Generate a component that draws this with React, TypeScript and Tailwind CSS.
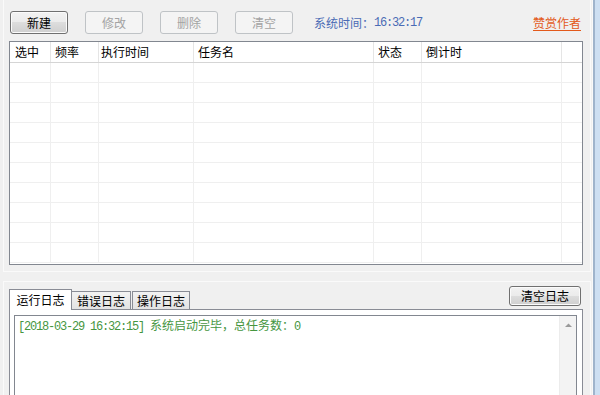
import type { ReactNode } from 'react'

const cols = [
  { label: '选中', w: 'w-[41px] pl-[5px]' },
  { label: '频率', w: 'w-[48px] pl-[4px]' },
  { label: '执行时间', w: 'w-[95px] pl-[2px]' },
  { label: '任务名', w: 'w-[180px] pl-[4px]' },
  { label: '状态', w: 'w-[48px] pl-[4px]' },
  { label: '倒计时', w: 'w-[140px] pl-[4px]' },
]

const mono = "font-['Liberation_Mono',monospace] text-[12px] tracking-[-1.2px]"

function WinButton({ children, disabled, className = '' }: { children: ReactNode; disabled?: boolean; className?: string }) {
  return (
    <button
      type="button"
      className={
        'flex items-center justify-center rounded-[3px] border text-[12px] leading-none ' +
        (disabled
          ? 'border-[#bfc3c6] bg-[#f4f4f4] text-[#a3a3a3] '
          : 'border-[#707070] bg-[linear-gradient(#f2f2f2_0%,#ebebeb_50%,#dddddd_50%,#cfcfcf_100%)] text-black shadow-[inset_0_0_0_1px_#fbfbfb] ') +
        className
      }
    >
      {children}
    </button>
  )
}

function Row({ header }: { header?: boolean }) {
  return (
    <div
      className={
        'flex shrink-0 ' +
        (header ? 'h-[21px] border-b border-[#d5d5d5] bg-white' : 'h-[20px] border-b border-[#efefef]')
      }
    >
      {cols.map((c) => (
        <div
          key={c.label}
          className={
            'flex shrink-0 items-center border-r leading-none ' +
            c.w +
            (header ? ' border-[#e5e5e5]' : ' border-[#efefef]')
          }
        >
          {header ? c.label : ''}
        </div>
      ))}
      <div className="flex-1" />
    </div>
  )
}

export default function App() {
  return (
    <div className="flex h-[395px] w-[600px] overflow-hidden bg-[#f0f0f0] font-['Noto_Sans_CJK_SC',sans-serif] text-[12px] text-black">
      <div className="flex w-[592px] flex-col">
        {/* top panel */}
        <div className="ml-[3px] flex h-[272px] w-[588px] shrink-0 flex-col border-x border-b border-[#fafafa]">
          <div className="flex h-[41px] shrink-0 items-start pl-[6px] pr-[9px] pt-[11px]">
            <div className="flex h-[23px] items-center gap-[17px]">
              <WinButton className="h-[23px] w-[58px]">新建</WinButton>
              <WinButton disabled className="h-[23px] w-[58px]">修改</WinButton>
              <WinButton disabled className="h-[23px] w-[58px]">删除</WinButton>
              <WinButton disabled className="h-[23px] w-[58px]">清空</WinButton>
            </div>
            <div className="ml-[21px] flex h-[23px] items-center text-[#4a6bb5]">
              <span>系统时间：</span>
              <span className={mono}>16:32:17</span>
            </div>
            <div className="flex-1" />
            <a className="flex h-[23px] items-center text-[#e35a1b] underline underline-offset-2">赞赏作者</a>
          </div>
          <div className="ml-[5px] flex h-[224px] w-[574px] shrink-0 flex-col overflow-hidden border border-[#828790] bg-white">
            <Row header />
            {Array.from({ length: 10 }).map((_, i) => (
              <Row key={i} />
            ))}
          </div>
        </div>

        <div className="h-[9px] shrink-0" />

        {/* bottom panel */}
        <div className="ml-[3px] flex w-[588px] flex-1 flex-col border-x border-t border-[#fafafa]">
          <div className="flex h-[27px] shrink-0 items-start justify-between">
            <div className="ml-[5px] flex h-[27px] items-end">
              <div className="relative z-10 mb-[-1px] flex h-[21px] w-[63px] items-center justify-center border border-b-0 border-[#898c95] bg-white pb-[1px]">
                运行日志
              </div>
              <div className="flex h-[18px] w-[59px] items-center justify-center border border-b-0 border-l-0 border-[#898c95] bg-[linear-gradient(#f2f2f2,#e3e3e3)]">
                错误日志
              </div>
              <div className="ml-[1px] flex h-[18px] w-[58px] items-center justify-center border border-b-0 border-[#898c95] bg-[linear-gradient(#f2f2f2,#e3e3e3)]">
                操作日志
              </div>
            </div>
            <WinButton className="mr-[9px] mt-[4px] h-[20px] w-[72px]">清空日志</WinButton>
          </div>
          <div className="ml-[5px] flex w-[574px] flex-1 border border-b-0 border-[#898c95] bg-white pl-[4px] pr-[5px] pt-[5px]">
            <div className="flex flex-1 border border-b-0 border-[#828790]">
              <div className="flex-1 pl-[3px] pt-[2px] leading-[14px] text-[#46963f]">
                <span className={mono}>[2018-03-29 16:32:15] </span>
                <span>系统启动完毕，总任务数：</span>
                <span className={mono}>0</span>
              </div>
              <div className="flex w-[17px] flex-col items-center border-l border-[#ececec] bg-[#f3f3f3]">
                <svg width="9" height="6" viewBox="0 0 9 6" className="mt-[6px]">
                  <path d="M1 5 L4.5 1.5 L8 5 Z" fill="#9a9a9a" />
                </svg>
              </div>
            </div>
          </div>
        </div>
      </div>
      {/* window frame */}
      <div className="flex w-[8px] shrink-0">
        <div className="w-px bg-[#f9f9f9]" />
        <div className="w-[2px] bg-[#9fb4cc]" />
        <div className="flex-1 bg-[#cddff2]" />
      </div>
    </div>
  )
}
